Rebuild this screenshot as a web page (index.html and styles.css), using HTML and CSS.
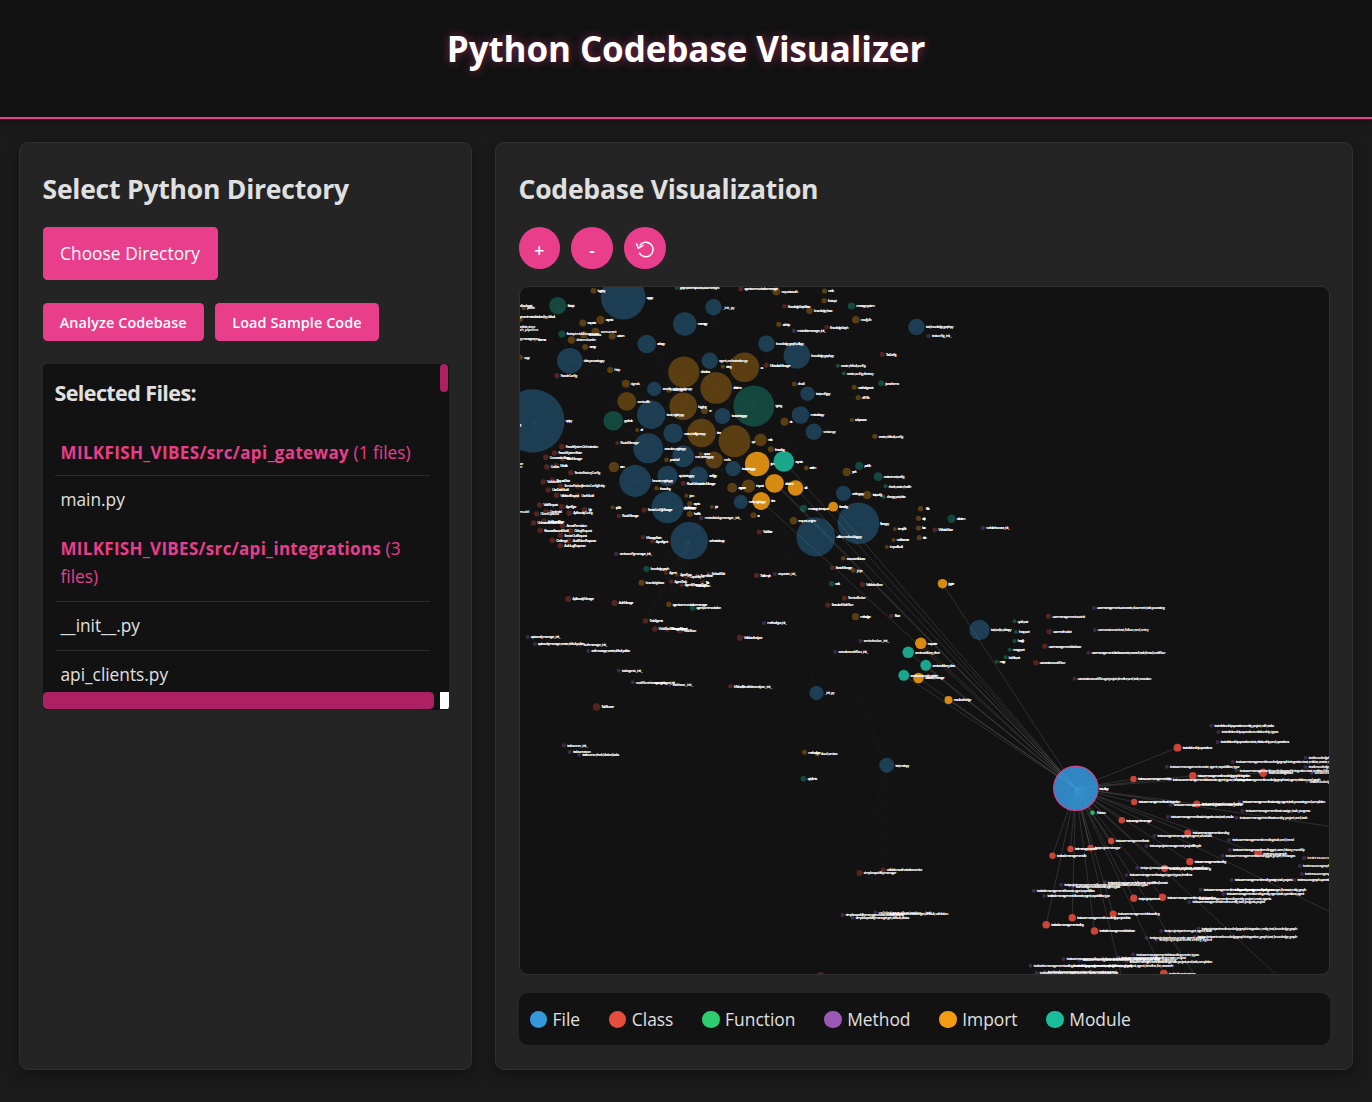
FILE: index.html
```html
<!DOCTYPE html>
<html lang="en">
<head>
<meta charset="utf-8">
<title>Python Codebase Visualizer</title>
<link rel="stylesheet" href="styles.css">
</head>
<body>
<header class="site-header"><h1>Python Codebase Visualizer</h1></header>
<main class="layout">
  <section class="panel">
    <h2 class="h-select">Select Python Directory</h2>
    <label class="choose"><span>Choose Directory</span></label>
    <div class="actions">
      <button class="btn analyze"><span>Analyze Codebase</span></button>
      <button class="btn load"><span>Load Sample Code</span></button>
    </div>
    <div class="files">
      <div class="files-view">
        <h3><span>Selected Files:</span></h3>
        <ul>
          <li class="dir"><strong class="d1">MILKFISH_VIBES/src/api_gateway</strong> <span>(1 files)</span></li>
          <li><span>main.py</span></li>
          <li class="dir last"><strong class="d2">MILKFISH_VIBES/src/api_integrations</strong> <span>(3<br>files)</span></li>
          <li><span>__init__.py</span></li>
          <li><span>api_clients.py</span></li>
        </ul>
      </div>
      <div class="vbar"><i></i></div>
      <div class="hbar"><i></i></div>
      <div class="corner"></div>
    </div>
  </section>
  <section class="panel">
    <h2 class="h-vis">Codebase Visualization</h2>
    <div class="zoom">
      <button>+</button>
      <button>-</button>
      <button aria-label="Reset"><svg width="22" height="22" viewBox="0 0 22 22" fill="none" stroke="#fff" stroke-width="1.5"><path d="M5.6 6.6A7.3 7.3 0 1 1 5.2 13.6"/><path d="M2.2 4.2 4.4 9.2 9.6 6.2"/></svg></button>
    </div>
    <div class="graph"><svg id="graph" viewBox="519.5 287 809 687"></svg></div>
    <div class="legend">
      <span><i class="file"></i><b>File</b></span>
      <span><i class="class"></i><b>Class</b></span>
      <span><i class="function"></i><b>Function</b></span>
      <span><i class="method"></i><b>Method</b></span>
      <span><i class="import"></i><b>Import</b></span>
      <span><i class="module"></i><b>Module</b></span>
    </div>
  </section>
</main>
<script src="graph.js"></script>
</body>
</html>
```
FILE: styles.css
```css
* { box-sizing: border-box; }
body { margin: 0; background: #1a1a1a; color: #e0e0e0; font: 17.3px/28.8px "Open Sans", "Noto Sans", sans-serif; height: 1102px; overflow: hidden; }
h1, h2, h3, ul { margin: 0; padding: 0; }
.site-header { height: 118.5px; background: #121212; border-bottom: 2px solid #e83e8c; text-align: center; padding-top: 21px; box-shadow: 0 2px 10px rgba(0,0,0,.3); }
h1 { font-size: 35px; line-height: 56px; font-weight: 700; color: #fff; letter-spacing: -.1px; text-shadow: 0 0 10px rgba(232,62,140,.5); }
.layout { display: grid; grid-template-columns: 453px 858px; gap: 23px; padding: 23.5px 18.5px 0; }
.panel { height: 927.5px; background: #242424; border: 1px solid #303030; border-radius: 9px; padding: 21.5px 23px; box-shadow: 0 4px 14px rgba(0,0,0,.32); }
h2 { font-size: 26.5px; line-height: 48px; font-weight: 700; height: 62.5px; letter-spacing: -.22px; white-space: nowrap; }
.choose { display: flex; width: 175px; height: 53px; background: #e83e8c; border-radius: 4.5px; color: #fff; align-items: center; justify-content: center; padding-top: 2px; white-space: nowrap; letter-spacing: .06px; }
.actions { display: flex; gap: 11px; margin-top: 23px; }
.btn { height: 38px; border: 0; padding: 0; border-radius: 4.5px; background: #e83e8c; color: #fff; font: 600 14.4px "Open Sans", sans-serif; white-space: nowrap; letter-spacing: .1px; }
.analyze { width: 161.5px; }
.load { width: 164px; }
.files { width: 406px; height: 346px; margin-top: 22.5px; background: #121212; border-radius: 4px; overflow: hidden; display: grid; grid-template-columns: 397px 9px; grid-template-rows: 328px 18px; }
.files-view { overflow: hidden; padding: 11.5px 10px 0 12px; }
h3 { font-size: 21.5px; line-height: 36px; font-weight: 700; height: 63.5px; letter-spacing: -.6px; }
ul { list-style: none; width: 375px; }
li { border-bottom: 1px solid #2b2b2b; padding: 10px 0 9.5px 6px; height: 49px; white-space: nowrap; }
li:nth-child(1) { height: 37px; padding-top: 0; }
li:nth-child(2) { border: 0; }
.dir { color: #e83e8c; }
.d1, .d2 { font-size: 17px; letter-spacing: .36px; }
.d2 { letter-spacing: .3px; }
.dir.last { height: 77.5px; }
.vbar i { display: block; width: 8px; height: 28px; background: #ad2063; border-radius: 4px; }
.hbar i { display: block; width: 391px; height: 17px; background: #ad2063; border-radius: 4.5px; }
.corner { background: #fff; height: 17px; }
.zoom { display: flex; gap: 11px; height: 59px; }
.zoom button { width: 41.7px; height: 41.7px; border: 0; border-radius: 50%; background: #e83e8c; color: #fff; font: 600 17.5px/22px "Open Sans", sans-serif; padding: 4px 0 0; display: flex; align-items: center; justify-content: center; }
.graph { width: 811px; height: 689px; border: 1px solid #303030; border-radius: 9px; overflow: hidden; background: #121212; }
.graph svg { display: block; width: 809px; height: 687px; }
.legend { margin-top: 18px; width: 811px; height: 52px; background: #121212; border-radius: 9px; display: flex; align-items: center; padding: 1px 0 0 11px; gap: 28.6px; font-size: 17.4px; color: #e0e0e0; }
.legend span { display: flex; align-items: center; gap: 5.6px; }
.legend b { font-weight: 400; }
.legend i { width: 17.5px; height: 17.5px; border-radius: 50%; }
i.file { background: #3498db; }
i.class { background: #e74c3c; }
i.function { background: #2ecc71; }
i.method { background: #9b59b6; }
i.import { background: #f39c12; }
i.module { background: #1abc9c; }
.node { fill-opacity: .32; }
.node.on { fill-opacity: .87; }
.node.selected { stroke: #e83e8c; stroke-width: 1.2; stroke-opacity: .85; }
.fill-f { fill: #3498db; }
.fill-c { fill: #e74c3c; }
.fill-u { fill: #2ecc71; }
.fill-m { fill: #9b59b6; }
.fill-i { fill: #f39c12; }
.fill-o { fill: #1abc9c; }
.edge { stroke: #999; stroke-width: 1; stroke-opacity: .02; }
.edge.on { stroke-opacity: .22; }
.tag { fill: #fff; font: 700 3.8px "Open Sans", sans-serif; }
```
FILE: graph.js
```js
// type x y radius labelWidth label; uppercase type = linked to the selected file
const data = `
f 622.7 297.3 22.3 8 app.py
o 557.3 305.7 8.7 8 fastapi
i 593 290.7 3 9 logging
u 676.3 288 2 41 graph_schema.process_document_sync
i 523.3 308 2.3 9 pickle
m 510 306 2 20 cachedloader.get
m 510 316.7 2 43 deploymentmetadata.load_by_default
m 510 327 2 23 metadata_store
m 510 330 2 26 graph_pipeline
m 510 339 2 26 deploy_manager.run
i 519.5 319 3 0 -
i 534 339.7 2 10 schemas
i 520 357.3 2.5 7 copy
f 713 307.3 8.2 13 __init__.py
f 684.3 324 11.8 11 memory.py
i 582.3 323 3.5 10 requests
i 600 320 4.2 9 asyncio
i 595 332 4.2 17 concurrent
o 561.3 334 3.6 34 fastapi.middleware.cors
i 583.3 334.7 3.5 14 dataclass
i 571 340 3.8 21 dotenv.loader
i 611.7 336 3.5 9 uvicorn
f 646.3 344 9.3 9 cache.py
i 584.7 347 3 8 numpy
f 569.3 360.7 12.8 22 data_processing.py
c 556.3 375.7 2.6 18 FacadeConfig
i 609.7 370 3.1 7 http
i 625.3 383.7 4 10 signals
f 709.3 360.7 8.2 30 agent_orchestration.py
i 722.3 366.7 2.1 7 string
i 683.3 372 15.6 11 dataclass
i 715.7 388 15.8 10 datetime
f 653.7 389 7.2 31 security_orchestration.py
i 668.3 390 2.8 15 base_agent
i 626.3 401.3 9.4 14 contextlib
f 650.7 414.7 14.2 19 trust_registry.py
i 682.7 406.3 13.8 10 logging
i 704 410.7 3.4 4 re
f 722 416 8 17 trust_strategy.py
f 532.3 421 31.7 8 api.py
m 510 425 2 9 config
o 612.7 420.7 9.8 10 pydantic
i 636.7 430 2 4 ssl
c 616.7 443 2 20 RouteManager
f 672.7 433.3 9.8 23 vector_intelligence.py
i 701 433 14.3 5 time
f 647.7 448.3 15 23 execution_registry.py
i 734 441.3 16 5 sys
f 682.7 456.3 10.8 20 core_strategy.py
i 713.7 460 8.6 8 redis
i 700 454 2 8 queue
i 666 459.7 2.3 11 protobuf
c 561.3 446.7 2.7 34 FacadeSystemOrchestration
c 554 453 2.7 25 FacadeSystemState
c 545.3 457.3 2.7 22 ConversationStage
c 562.3 458.7 2.7 17 StateManager
c 740.3 289 2.5 35 agentcommunicationmanager
i 775.7 291.3 4 18 requests.auth
i 824 291 2.6 7 redis
i 823.7 300.7 2.6 10 fastapi
c 784 306.3 2.2 24 KnowledgeGraphStore
i 809 310.7 3.2 20 knowledge_base
o 851 306 3.6 20 message_system
i 855.3 319.7 3.8 12 neo4j_db
i 778.3 324.3 2.6 9 aiohttp
m 793.3 330.7 2.2 30 metadatamanager.__init__
c 826 327.3 2.2 20 KnowledgeGraph
f 916 327 8.2 29 test_knowledge_graph.py
m 928 336 2.2 21 testconfig.__init__
f 766 343.7 8.3 29 knowledge_graph_utils.py
f 796.3 355.3 13.3 24 knowledge_graph.py
i 744 367.3 14.8 4 os
c 765.7 365.3 2.5 22 MetadataManager
c 881.7 354.3 2.5 12 TestConfig
u 837.3 365.7 2 26 create_default_config
u 843.3 373.3 2 28 create_config_directory
i 793.7 384 2.5 8 shutil
f 807 393.7 7.2 16 test_config.py
i 853.7 387.3 2.5 17 watchdog.event
o 880.7 383.3 3 15 jsonschema
i 857.7 397.7 2.6 9 difflib
o 753.3 406 20.5 8 typing
f 800 415 8.8 15 metadata.py
i 784 421.7 4 4 ast
f 813.3 431.7 8.2 14 version.py
i 851.3 420 2 13 subprocess
i 874.3 436.3 2.6 26 create_default_config
i 760 440 6.2 6 math
i 770.3 449.3 3 11 threading
i 613.3 467 5.2 6 enum
f 634.7 481 15.9 22 browser_registry.py
f 667 476 10.2 17 api_strategy.py
f 698 476 9.6 9 config.py
i 656 488.3 2.3 12 threading
c 682.7 483.3 2.6 30 RouteOrchestrationManager
f 667 507.3 16 12 api_registry.py
i 686 495.7 2 6 json
i 689.3 503.7 2.6 8 asyncio
m 682 508 .1 14 gh_discovery
i 689.3 514 3 8 hashlib
i 711.3 507 2 4 jwt
m 700.7 518 2.2 38 metadatalogmanager.__init__
i 612 507.3 2 7 zipfile
c 643.7 510 2.6 26 ServiceConfigManager
c 618.3 516 2.2 18 RouteManager
f 688.7 540.7 18.8 17 orchestration.py
c 642.3 537.3 2.2 17 MessageState
c 651.7 541.3 2.2 14 AsyncAgent
m 615.7 553.7 2.2 34 serviceconfigmanager.__init__
o 646 569 3 20 knowledge_graph
i 641 582.7 3 20 knowledgebase
c 665.3 573 2.1 9 Agent
c 676.3 574.7 2.1 13 AgentType
c 686 577 2.1 13 Capability
c 696.7 575.7 2.1 14 AgentState
c 708 574 2.1 15 SubtaskRole
c 670.7 581.7 2.1 14 AgentTask
c 681 585 2.1 24 AgentMessageType
c 692 585.3 2.1 16 Subscription
c 702 582.3 2.1 5 Task
c 567.7 599 3.1 23 ApiSecurityManager
c 614 603 3.1 16 AuthManager
i 668.3 604.3 2.7 36 agentcommunicationmanager
o 692 608 2.7 26 agent_communication
c 645 621 2.7 15 TaskAgents
c 654.3 629 2.7 30 WorkflowManagerAgency
c 666.7 629 2.7 18 ManagerAgent
c 679.3 630.7 2.7 14 TaskBase
m 527.3 637 2 31 apisecuritymanager.__init__
c 546.3 467 2.7 10 Codecs
c 555.7 465.7 2.7 9 Models
c 570.3 472.7 2.7 27 ServiceFactoryConfig
c 542.7 482 2.7 14 Validator
c 552 480.3 2.7 15 RequestData
c 560 486 2.7 20 ServiceFactory
c 577 486 2.7 25 ServiceConfigEntity
c 547.7 490 2.7 18 UserDataModel
c 556 495.3 2.7 20 ValidatedRequest
c 577 495.7 2.7 14 UserModel
c 539 505 2.7 16 ValidRequest
c 561.3 506.7 2.7 12 AgentType
c 584 509.7 2.7 5 User
c 536 514 2.7 20 ClientOptions
c 545.7 511.7 2.7 13 Credential
c 568.7 513 2.7 21 ApiSecurityConfig
c 533 523 2.7 27 OrchestratorDataModel
c 543.3 521.3 2.7 18 AdditionalBase
c 562 525.7 2.7 22 AccessPermission
c 539.7 530.3 2.7 26 ResourceAccountModel
c 570 531 2.7 19 DialogRequest
c 560 535.3 2.7 24 ServiceOutRequest
c 551.7 540.3 2.7 13 Challenge
c 568.3 540.7 2.7 25 AuditTokenResponse
c 559.7 545.7 2.7 23 AuthLogResponse
m 512 464 2 9 server
m 512 467 2 8 run
m 505 512 2 22 service_model
I 756.7 464 12.3 5 json
O 783.3 461.3 10.4 9 asyncio
i 805.7 468 2.4 8 random
f 732.7 468.7 7.6 15 trust_strategy.py
I 774 483.3 9.4 10 datetime
I 795 488 7.8 4 uuid
i 748 486 6.6 9 inspect
i 731.7 487.7 5 9 argparse
f 740.3 502 7 18 web_registry.py
I 760.7 501 8.9 5 time
i 753 515.3 3 3 csv
c 758.7 532 2.6 11 TaskState
o 803 508.3 3.6 22 message_transport
I 832.7 506.7 4.9 10 threading
i 793 520.7 3.7 19 request_engine
f 843 493.3 7.6 13 settings.py
i 846.3 472 4.3 5 yaml
o 858.7 466 4 8 pathlib
o 877.7 476.7 4.4 22 environment_config
i 866.7 495 4.3 11 test_config
u 885 486.3 2 24 check_version_health
u 883.3 497 2 20 change_port_data
f 858 523.3 20.8 10 library.py
f 815.3 537 19.4 27 utilities_methodology.py
i 920 508.7 2.6 5 flask
i 918 518.3 2.6 5 sqlite
i 918 528 2.6 5 bson
i 918.7 537.7 2.6 5 torch
i 894.3 529 2 10 tempfile
i 893 540 2 14 webbrowser
i 886.3 547 2 14 importlib.util
o 951 518.7 4.2 10 selenium
c 934.3 530 2.4 16 WebsiteDriver
m 982.3 528 2.2 25 websitebrowser.__init__
i 842.7 558.3 2.3 20 concurrent.futures
c 831.7 568 2.3 18 ServiceManager
i 852.7 570.3 2.5 7 jinja
o 831 583.7 2.6 6 redis
c 862 584.3 2.6 18 ValidationStore
c 844 598 2.6 19 ServiceBroker
c 827.3 605 2.6 23 ExecutionWorkflow
i 855 616.7 3.6 12 methodtype
c 890.7 616 2.2 7 Route
I 942 583.7 4.8 7 jupyter
f 979 630 10.2 22 test_tool_to_data.py
c 756 575.3 2.6 12 TestSample
m 774.3 574 2.1 20 requester.__init__
m 763.3 623 2.1 21 methodtype.__init__
c 739.3 637.7 3 20 ValidateAnalyzer
m 534.3 644 2 48 apisecuritymanager_create_default_policies
m 580 645 2 25 authmanager.__init__
m 587.7 651 2 40 authmanager_create_default_policies
m 618.3 670.7 2 22 taskagents.__init__
m 632.3 682.3 2 32 workflowmanager.__init__
m 650 682.3 2 24 manageragent.__init__
m 669 684.7 2 22 taskbase.__init__
c 596 707 3.7 14 TaskRunner
c 730 686.3 2.2 13 MethodSet
m 741.7 687 2 28 validateanalyzer.__init__
m 563.3 745.3 2.1 22 taskrunner.__init__
m 569.3 752 2.1 19 taskrunner.run
m 578.7 754.7 2.1 38 taskrunner_check_blocked_tasks
m 860 641 2 27 servicebroker.__init__
m 834.7 651.7 2 31 executionworkflow.__init__
I 920.3 643.3 5.8 11 requester
O 907.7 652.3 5.8 26 services.delivery_client
O 925.3 665.3 5.5 24 services.delivery_data
O 903.3 675.3 5.5 29 services.network_register
I 918 678 5.3 21 validator_manager
I 948 700 4 19 resultsetbridge
f 816 693 7.2 11 __init__.py
i 804 752.3 2.5 14 methodtype
i 816.7 754 2.5 18 cloud_services
o 803 778.7 2.9 11 api_clients
f 886.3 765.3 7.5 15 test_main.py
u 1014 621.3 2 12 quick_sort
u 1015.3 632 2 12 heap_sort
u 1014 641 2 8 heapify
u 1009.3 649.7 2 13 merge_sort
u 1005 657.3 2 13 bubble_sort
u 996 661.7 2 7 merge
c 1048 616.3 2.7 34 usermanagementuser.init
c 1048.7 631.7 2.7 20 usermethodset
c 1044.3 646.3 2.7 34 usermanagementdatabase
c 1035.3 662.7 2.7 27 usersessionsworkflow
m 1093.3 608 2 69 usermanagementuser.create_document_task_processing
m 1094.3 630 2 52 usersessionset.test_follow_and_entry
m 1088 652.7 2 75 usermanagementdatabase.create_research_task_thread_workflow
m 1074 678.7 2 75 usersessionsworkflow.get_project_timeline_and_task_execution
F 1075.3 788.3 22.2 11 test_utils.py
C 1177 747.7 3.9 31 testrelationshipoperations
C 1133 779 3.2 35 testresourcemanagementdata
C 1192.3 775.7 3.8 54 testusermanagementknowledgegraphintegration
C 1262.7 772.7 4.2 26 testknowledgebase
C 1133.7 802 3.2 43 testusermanagementbasicintegration
C 1196.3 804 3.6 43 testuserintegrationapplication
C 1121.3 820.3 3.3 27 testuseragentmanager
C 1187.3 833 3.6 38 testusermanagementtrending
C 1110.7 841 3.2 35 testusermanagementbasic
C 1070 849 3.2 24 testmanagementdb
C 1090 848 3.2 27 testprojectmanager
C 1052 855.7 3.2 31 testtaskmanagementdb
C 1257.7 853.3 4 25 testresourcegraph
U 1092 812.7 2.3 10 fixtures
m 1210.7 725.7 2 61 testrelationshipoperations.entity_project_with_tasks
m 1218 732 2 58 testrelationshipoperations.relationship_types
m 1217 742 2 70 testrelationshipoperations.test_relationship_and_operations
m 1232.3 762 2 108 testusermanagementknowledgegraphintegration.test_entities_create_merge_link
m 1305 757.7 2 45 testknowledgebase.create_agent
m 1166.3 766.7 2 71 testusermanagement.create_agent_capabilities_type
m 1305 767 2 45 testknowledgebase.get_agents
m 1236 770.3 2 105 testusermanagementknowledgegraphintegration.test_entities_follow_through
m 1311 773 2 40 testknowledgebase.run
m 1169 779.7 2 80 testresourcemanagementdata.create_agent_types_with_integration
m 1233.3 779.5 2 85 testusermanagementknowledgegraph.test_agent_relations_and_graph
m 1306 781.5 2 40 testknowledgebase.create
m 1239 802 2 84 testusermanagementbasic.assign_agent_task_processing_and_completion
m 1170.3 804.7 2 70 testusermanagementbasicintegration.create_profile
m 1242 810.7 2 66 testusermanagementbasic.assign_task_progress
m 1167.3 817 2 64 testusermanagementbasicintegration.test_task_results
m 1236 817.7 2 69 testusermanagementbasic.entity_project_and_task
m 1153.7 835.7 2 56 testuseragentmanager.get_agent_schedules
m 1228.7 840 2 63 testusermanagementtrending.task_and_trend
m 1146 846 2 53 testuserprojectmanagement_projectlifecycle
m 1229.3 850 2 73 testusermanagementtrending.get_users_history_monthly
m 1222 855.7 2 71 testusermanagementtrending.get_graph_messages
m 1303.7 858 2 50 testresourcegraph.create
C 1189.3 861.7 3.6 33 testusermanagementtrending
C 1164 868.3 3.6 43 testuserprojectcapabilitiesconfig
C 1133.3 898.3 3.7 23 testprojectpartners
C 1162 897.3 3.7 50 testusermanagementtimelineintegration
C 1112.7 914 3.6 43 testusermanagementdatascaling
C 1071.7 917.7 3.7 55 testusermanagementknowledgeprojectdata
C 1045.7 924.7 3.8 34 testtasksmanagementscaling
C 1094 931 3.8 37 testtaskmanagementdatabase
C 1163.3 973.7 4 28 testtasksessionstore
m 1136.7 868 2 68 testprojectcapabilities.create_projects_cascading
m 1126 875 2 64 testusermanagementbasic.get_agent_types_timelines
m 1060.7 884.7 2 85 testprojectmanagementdb.create_agent_capabilities_schedule_types
m 1104.3 882.3 2 61 testprojectmanagementdb.create_capabilities_forecast
m 1072 886.7 2 46 testmanagementdb.create_agent_types
m 1033.3 890.7 2 59 testtaskmanagementdb.create_agent_capabilities
m 1043.7 896 2 64 testtaskmanagementdb.create_agent_capabilities_type
m 1299.3 866 2 45 testresourcegraph.operations
m 1301.3 874 2 45 testresourcegraph.operations
m 1293.7 880 2 45 testresourcegraph.operations_entity
m 1231.3 880 2 59 testusermanagementtrending.assign_task_projects
m 1200 889.7 2 104 testusermanagementtrending.entity_assign_and_task_messages_forecast_entity_graph
m 1231.3 889.7 2 40 testusermanagement.progress
m 1223 894 2 79 testusermanagementtrending.entity_agent_task_operations_agent
m 1195 899 2 74 testusermanagementtrending.entity_project_create_agents
m 1188.7 902 2 74 testusermanagementtimeline.entity_task_progress_project
m 1198 928.7 2 97 testprojectpartnersknowledgegraph.integration_entity_test_knowledge_graph
m 1160.7 931 2 49 testprojectpartners.get_agent_task
m 1146 938 2 57 testprojectpartners.create_agent_project
m 1155.7 939.7 2 54 testprojectpartners.entity_agent
m 1194 937 2 101 testprojectpartnersknowledgegraph.integration_graph_test_knowledge_graph
m 1063 959 2 95 testusermanagementknowledgeprojectdata.create_project_agent_timeline
m 1078.7 960 2 95 testusermanagementdatascaling.create_project_task_cascading
m 1117.7 957.3 2 66 testusermanagementdatascaling.create_project
m 1132.7 954.3 2 64 testusermanagementdatascaling.create_types
m 1126 961.3 2 84 testusermanagementdatascaling.create_project_and_task_completion
m 1030 965.7 2 141 testtasksmanagementscaling.knowledgegraph.create_capabilities_and_project_agent_timeline_for_research
m 1070 966 2 60 testtasksmanagementscaling.create_graph
m 1036 972.7 2 80 testtasksmanagementscaling.create_agent_capabilities_type
m 1044.3 972 2 70 testtasksmanagementscaling.create_agent
c 820 976 4 0 -
c 859 873 3 34 simplecapabilitymanager
c 882.5 870 2.5 37 validationauthorizationservice
m 842 915 2 60 simplecapabilitymanager.create_default_priority
m 875 912.5 2 57 validationauthorization.__init__
m 886 914 2 60 validationauthorization.get_default_validation
m 852 918 2 55 simplecapabilitymanager.get_default_status`;

const svg = document.getElementById('graph');
const add = (tag, attrs, text) => {
  const el = document.createElementNS('http://www.w3.org/2000/svg', tag);
  for (const k in attrs) el.setAttribute(k, attrs[k]);
  if (text) el.textContent = text;
  svg.appendChild(el);
};
const nodes = data.trim().split('\n').map(line => {
  const [t, x, y, r, w, label] = line.split(' ');
  return { t: t.toLowerCase(), on: t < 'a', x: +x, y: +y, r: +r, w: +w, label };
});
const hub = nodes.find(n => n.t === 'f' && n.on);
const line = (a, b, cls) => add('line', { x1: a.x, y1: a.y, x2: b.x, y2: b.y, class: cls });

// background dependencies between files and their nearest members
const files = nodes.filter(n => n.t === 'f' && !n.on);
const shared = nodes.filter(n => n.r > 8 && (n.t === 'i' || n.t === 'o'));
files.forEach(f => shared.forEach((s, k) => { if ((k + Math.round(f.x)) % 2) line(f, s, 'edge'); }));
nodes.filter(n => n.t !== 'f' && n.x < 1070).forEach(n => {
  const near = files.reduce((a, b) => Math.hypot(a.x - n.x, a.y - n.y) < Math.hypot(b.x - n.x, b.y - n.y) ? a : b);
  line(near, n, 'edge');
});

const targets = nodes.filter(n => n.on && n !== hub)
  .concat([[1340, 828], [1340, 917], [1275, 974], [1196, 978], [1122, 980]].map(([x, y]) => ({ x, y })));
targets.forEach(n => line(hub, n, 'edge on'));
nodes.forEach(n => add('circle', { cx: n.x, cy: n.y, r: n.r, class: `node fill-${n.t}${n.on ? ' on' : ''}${n === hub ? ' selected' : ''}` }));
nodes.filter(n => n.w).forEach(n => add('text', { x: n.x + n.r + 1, y: n.y + 1.3, textLength: n.w - 1, class: 'tag' }, n.label));
```
